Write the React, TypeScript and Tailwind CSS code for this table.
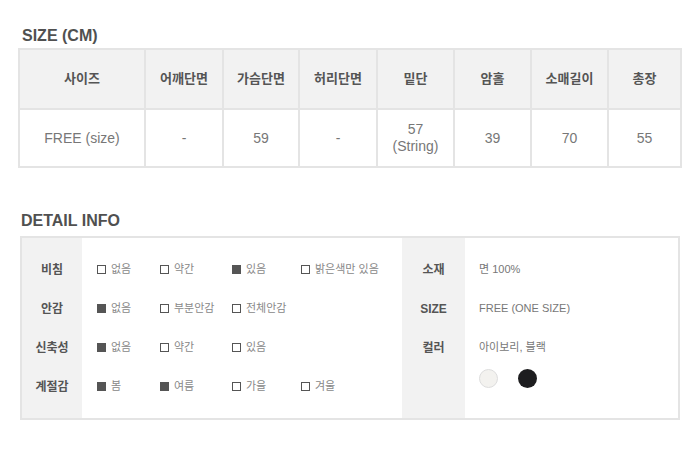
const font = { fontFamily: '"Liberation Sans", "Noto Sans CJK KR", sans-serif' };

const headers = ["사이즈", "어깨단면", "가슴단면", "허리단면", "밑단", "암홀", "소매길이", "총장"];
const values = ["FREE (size)", "-", "59", "-", "57\n(String)", "39", "70", "55"];
const widths = ["w-[126px]", "w-[78px]", "w-[76px]", "w-[78px]", "w-[77px]", "w-[77px]", "w-[77px]", "flex-1"];

type Opt = { label: string; on: boolean };

const detailRows: { label: string; opts: Opt[] }[] = [
  { label: "비침", opts: [{ label: "없음", on: false }, { label: "약간", on: false }, { label: "있음", on: true }, { label: "밝은색만 있음", on: false }] },
  { label: "안감", opts: [{ label: "없음", on: true }, { label: "부분안감", on: false }, { label: "전체안감", on: false }] },
  { label: "신축성", opts: [{ label: "없음", on: true }, { label: "약간", on: false }, { label: "있음", on: false }] },
  { label: "계절감", opts: [{ label: "봄", on: true }, { label: "여름", on: true }, { label: "가을", on: false }, { label: "겨울", on: false }] },
];

const infoRows = [
  { label: "소재", value: "면 100%" },
  { label: "SIZE", value: "FREE (ONE SIZE)" },
  { label: "컬러", value: "아이보리, 블랙" },
];

function Check({ opt }: { opt: Opt }) {
  return (
    <div className="flex items-center gap-[5px]">
      <span className={`block h-[9px] w-[9px] border-[1.5px] border-[#555] ${opt.on ? "bg-[#555]" : "bg-white"}`} />
      <span className="text-[11px] text-[#888]">{opt.label}</span>
    </div>
  );
}

export default function App() {
  return (
    <div className="h-[464px] w-[700px] bg-white pt-[25px]" style={font}>
      <h2 className="pl-[22px] text-[16px] font-bold leading-[22px] text-[#505050]">SIZE (CM)</h2>

      <div className="ml-[18px] mt-[1px] w-[664px] border-2 border-[#e4e4e4]">
        <div className="flex h-[58px] bg-[#f2f2f2]">
          {headers.map((h, i) => (
            <div key={h} className={`${widths[i]} flex items-center justify-center text-[13px] font-semibold text-[#555] ${i < headers.length - 1 ? "border-r-2 border-[#e4e4e4]" : ""}`}>
              {h}
            </div>
          ))}
        </div>
        <div className="flex h-[58px] border-t-2 border-[#e4e4e4]">
          {values.map((v, i) => (
            <div key={i} className={`${widths[i]} flex items-center justify-center whitespace-pre-line text-center text-[14px] leading-[17px] text-[#777] ${i < values.length - 1 ? "border-r-2 border-[#e4e4e4]" : ""}`}>
              {v}
            </div>
          ))}
        </div>
      </div>

      <h2 className="mt-[42px] pl-[21px] text-[16px] font-bold leading-[22px] text-[#505050]">DETAIL INFO</h2>

      <div className="ml-[20px] mt-[4px] flex h-[184px] w-[660px] border-2 border-[#e4e4e4]">
        <div className="flex w-[380px]">
          <div className="w-[60px] bg-[#f2f2f2] pt-[12px]">
            {detailRows.map((r) => (
              <div key={r.label} className="flex h-[39px] items-center justify-center text-[12px] font-semibold text-[#555]">{r.label}</div>
            ))}
          </div>
          <div className="flex-1 pl-[15px] pt-[12px]">
            {detailRows.map((r) => (
              <div key={r.label} className="grid h-[39px] grid-cols-[63px_72px_69px_auto] items-center">
                {r.opts.map((o) => <Check key={o.label} opt={o} />)}
              </div>
            ))}
          </div>
        </div>
        <div className="flex flex-1">
          <div className="w-[63px] bg-[#f2f2f2] pt-[12px]">
            {infoRows.map((r) => (
              <div key={r.label} className="flex h-[39px] items-center justify-center text-[12px] font-semibold text-[#555]">{r.label}</div>
            ))}
          </div>
          <div className="flex-1 pl-[14px] pt-[12px]">
            {infoRows.map((r) => (
              <div key={r.label} className="flex h-[39px] items-center text-[11px] text-[#777]">{r.value}</div>
            ))}
            <div className="mt-[2px] flex gap-[20px]">
              <span className="block h-[19px] w-[19px] rounded-full border border-[#ddd] bg-[#f3f2ef]" />
              <span className="block h-[19px] w-[19px] rounded-full bg-[#1d1d1f]" />
            </div>
          </div>
        </div>
      </div>
    </div>
  );
}
